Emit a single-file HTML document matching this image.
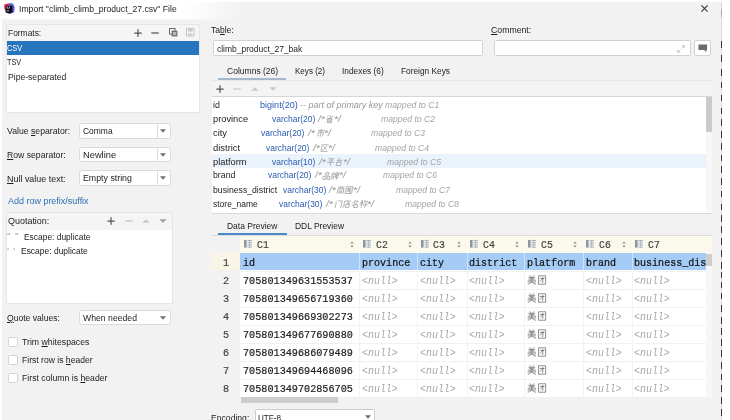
<!DOCTYPE html>
<html><head><meta charset="utf-8"><title>Import File</title>
<style>
html,body{margin:0;padding:0;}
html{overflow:hidden;width:730px;height:420px;background:#f2f2f2;}
body{width:730px;height:420px;overflow:hidden;background:#f2f2f2;position:relative;font-family:"Liberation Sans", sans-serif;}
.a{position:absolute;}
.t{position:absolute;white-space:pre;transform-origin:0 50%;}
.m{-webkit-text-stroke:0.22px;}
u{text-decoration:underline;text-underline-offset:1px;text-decoration-thickness:0.8px;}
svg{position:absolute;overflow:visible;}
#w{position:absolute;left:0;top:0;width:730px;height:420px;filter:blur(0.55px);}
#c{position:absolute;left:0;top:0;width:730px;height:420px;overflow:hidden;}
</style></head><body><div id="c"><div id="w">
<div class="a" style="left:-10px;top:-10px;width:750px;height:440px;background:#f2f2f2;"></div>
<div class="a" style="left:-10px;top:-10px;width:750px;height:12px;background:#ffffff;"></div>
<div class="a" style="left:0px;top:2px;width:730px;height:18px;background:linear-gradient(90deg,#ffffff 0,#ffffff 185px,#f2f2f2 240px);"></div>
<div class="a" style="left:0px;top:18px;width:730px;height:2.6px;background:linear-gradient(180deg,rgba(242,242,242,0),rgba(242,242,242,1));"></div>
<div class="a" style="left:-10px;top:19px;width:11.6px;height:411px;background:#ffffff;"></div>
<div class="a" style="left:722px;top:-10px;width:18px;height:440px;background:#ffffff;"></div>
<div class="a" style="left:721px;top:2px;width:1px;height:428px;background:#d9d9d9;"></div>
<div class="a" style="left:721px;top:41px;width:1px;height:6.8px;background:#383838;"></div>
<div class="a" style="left:721px;top:55px;width:1px;height:6.8px;background:#383838;"></div>
<div class="a" style="left:721px;top:69px;width:1px;height:6.8px;background:#383838;"></div>
<div class="a" style="left:721px;top:81.5px;width:1px;height:6.8px;background:#383838;"></div>
<div class="a" style="left:721px;top:94.5px;width:1px;height:6.8px;background:#383838;"></div>
<div class="a" style="left:721px;top:107.5px;width:1px;height:6.8px;background:#383838;"></div>
<div class="a" style="left:721px;top:119.3px;width:1px;height:6.8px;background:#383838;"></div>
<div class="a" style="left:721px;top:131px;width:1px;height:6.8px;background:#383838;"></div>
<div class="a" style="left:721px;top:142.9px;width:1px;height:6.8px;background:#383838;"></div>
<div class="a" style="left:721px;top:154.6px;width:1px;height:6.8px;background:#383838;"></div>
<div class="a" style="left:721px;top:166.4px;width:1px;height:6.8px;background:#383838;"></div>
<div class="a" style="left:721px;top:178.2px;width:1px;height:6.8px;background:#383838;"></div>
<div class="a" style="left:721px;top:190.6px;width:1px;height:6.8px;background:#383838;"></div>
<div class="a" style="left:721px;top:203.6px;width:1px;height:6.8px;background:#383838;"></div>
<div class="a" style="left:721px;top:214.8px;width:1px;height:6.8px;background:#383838;"></div>
<div class="a" style="left:721px;top:226.4px;width:1px;height:6.8px;background:#383838;"></div>
<div class="a" style="left:721px;top:238.2px;width:1px;height:6.8px;background:#383838;"></div>
<div class="a" style="left:721px;top:250px;width:1px;height:6.8px;background:#383838;"></div>
<div class="a" style="left:721px;top:261.8px;width:1px;height:6.8px;background:#383838;"></div>
<div class="a" style="left:721px;top:271.6px;width:1px;height:6.8px;background:#383838;"></div>
<div class="a" style="left:721px;top:281.6px;width:1px;height:6.8px;background:#383838;"></div>
<div class="a" style="left:721px;top:292.6px;width:1px;height:6.8px;background:#383838;"></div>
<div class="a" style="left:721px;top:305px;width:1px;height:6.8px;background:#383838;"></div>
<div class="a" style="left:721px;top:316.8px;width:1px;height:6.8px;background:#383838;"></div>
<div class="a" style="left:721px;top:327.8px;width:1px;height:6.8px;background:#383838;"></div>
<div class="a" style="left:721px;top:339.3px;width:1px;height:6.8px;background:#383838;"></div>
<div class="a" style="left:721px;top:350.3px;width:1px;height:6.8px;background:#383838;"></div>
<div class="a" style="left:721px;top:361.8px;width:1px;height:6.8px;background:#383838;"></div>
<div class="a" style="left:721px;top:373.6px;width:1px;height:6.8px;background:#383838;"></div>
<div class="a" style="left:721px;top:385.4px;width:1px;height:6.8px;background:#383838;"></div>
<div class="a" style="left:721px;top:397.1px;width:1px;height:6.8px;background:#383838;"></div>
<div class="a" style="left:721px;top:409px;width:1px;height:6.8px;background:#383838;"></div>
<div class="a" style="left:721px;top:9px;width:1px;height:8px;background:#b0b0b0;"></div>
<svg style="left:3.5px;top:2.7px" width="10.8" height="10.8" viewBox="0 0 10.8 10.8"><defs><linearGradient id="ig1" x1="0" y1="0" x2="1" y2="0.6"><stop offset="0" stop-color="#f2307a"/><stop offset="1" stop-color="#d01f3c"/></linearGradient><linearGradient id="ig2" x1="0" y1="0" x2="1" y2="1"><stop offset="0" stop-color="#1f6fd6"/><stop offset="1" stop-color="#8a4ff0"/></linearGradient></defs><path d="M0.3 1.2L5.8 0.2L6.2 4.5L1.2 7.5L0.2 5Z" fill="url(#ig1)"/><path d="M5.8 0.2L8.8 0.6L10.7 4L10.2 9.2L6.6 10.8L4 9.5Z" fill="url(#ig2)"/><path d="M1.2 7.5L4 10.5L7 10.8L3 6Z" fill="#14205e"/><rect x="1.7" y="2.8" width="6.7" height="6.9" fill="#06060e"/><path d="M2.7 3.6H3.6V5.7H2.7ZM4.3 3.6H5.7V5.1Q5.7 5.8 4.9 5.8H4.2V5.2H4.8V3.6Z" fill="#e8e8e8"/><rect x="2.6" y="7.5" width="2.6" height="0.7" fill="#fff"/></svg>
<span class="t" id="t0" style="left:19.3px;top:1.8px;line-height:14px;font-size:9.8px;color:#1c1c1c;transform:scaleX(0.8809);">Import "climb_climb_product_27.csv" File</span>
<svg style="left:701.2px;top:5.4px" width="7" height="7" viewBox="0 0 7 7"><path d="M0.4 0.4L6.6 6.6M6.6 0.4L0.4 6.6" stroke="#333" stroke-width="1.05" fill="none"/></svg>
<div class="a" style="left:6px;top:24px;width:194px;height:89px;background:#ffffff;border:1px solid #e6e6e6;box-sizing:border-box;"></div>
<div class="a" style="left:7px;top:25px;width:192px;height:16px;background:#f5f5f5;"></div>
<span class="t" id="t1" style="left:7.6px;top:25.5px;line-height:14px;font-size:9.6px;color:#1c1c1c;transform:scaleX(0.8769);">Formats:</span>
<svg style="left:132.8px;top:27.6px" width="10" height="10" viewBox="-5 -5 10 10"><path d="M-3.7 0H3.7M0 -3.7V3.7" stroke="#555" stroke-width="1.25" fill="none"/></svg>
<svg style="left:150px;top:27.6px" width="10" height="10" viewBox="-5 -5 10 10"><path d="M-3.7 0H3.7" stroke="#555" stroke-width="1.25" fill="none"/></svg>
<svg style="left:169px;top:27.5px" width="9" height="9" viewBox="0 0 9 9"><rect x="0.5" y="0.5" width="5.6" height="5.6" fill="none" stroke="#6e6e6e" stroke-width="1"/><rect x="2.6" y="2.6" width="5.8" height="5.8" fill="#6e6e6e"/><rect x="3.8" y="4" width="3.4" height="3" fill="#f7f7f7" opacity="0.55"/></svg>
<svg style="left:186.3px;top:28px" width="8.5" height="8.5" viewBox="0 0 9 9"><path d="M0.5 0.5H8.5V8.5H0.5Z" fill="none" stroke="#c4c4c4" stroke-width="1"/><rect x="2" y="0.5" width="5" height="3.2" fill="#c9c9c9"/><rect x="2" y="5.5" width="5" height="3" fill="#d4d4d4"/></svg>
<div class="a" style="left:7px;top:41px;width:192px;height:14px;background:#2675bf;"></div>
<span class="t" id="t2" style="left:7.4px;top:41.3px;line-height:14px;font-size:9.6px;color:#ffffff;transform:scaleX(0.7702);">CSV</span>
<span class="t" id="t3" style="left:7.4px;top:55.0px;line-height:14px;font-size:9.6px;color:#1c1c1c;transform:scaleX(0.7605);">TSV</span>
<span class="t" id="t4" style="left:7.5px;top:69.9px;line-height:14px;font-size:9.6px;color:#1c1c1c;transform:scaleX(0.8958);">Pipe-separated</span>
<span class="t" id="t5" style="left:6.9px;top:124.2px;line-height:14px;font-size:9.6px;color:#1c1c1c;transform:scaleX(0.9053);">Value <u>s</u>eparator:</span>
<div class="a" style="left:78.8px;top:123.4px;width:91.8px;height:15.5px;background:#ffffff;border:1px solid #dadada;box-sizing:border-box;border-radius:2.5px;"></div>
<div class="a" style="left:157px;top:124.4px;width:1px;height:13.5px;background:#dcdcdc;"></div>
<svg style="left:158.4px;top:126.45000000000002px" width="10" height="10" viewBox="-5 -5 10 10"><path d="M-3.0 -1.65L0 1.65L3.0 -1.65Z" fill="#707070"/></svg>
<span class="t" id="t6" style="left:83.4px;top:124.25px;line-height:14px;font-size:9.6px;color:#1c1c1c;transform:scaleX(0.8811);">Comma</span>
<span class="t" id="t7" style="left:6.9px;top:147.9px;line-height:14px;font-size:9.6px;color:#1c1c1c;transform:scaleX(0.9022);"><u>R</u>ow separator:</span>
<div class="a" style="left:78.8px;top:146.8px;width:91.8px;height:15.5px;background:#ffffff;border:1px solid #dadada;box-sizing:border-box;border-radius:2.5px;"></div>
<div class="a" style="left:157px;top:147.8px;width:1px;height:13.5px;background:#dcdcdc;"></div>
<svg style="left:158.4px;top:149.85000000000002px" width="10" height="10" viewBox="-5 -5 10 10"><path d="M-3.0 -1.65L0 1.65L3.0 -1.65Z" fill="#707070"/></svg>
<span class="t" id="t8" style="left:83.4px;top:147.65px;line-height:14px;font-size:9.6px;color:#1c1c1c;transform:scaleX(0.9695);">Newline</span>
<span class="t" id="t9" style="left:7.2px;top:171.5px;line-height:14px;font-size:9.6px;color:#1c1c1c;transform:scaleX(0.9311);"><u>N</u>ull value text:</span>
<div class="a" style="left:78.8px;top:170.3px;width:91.8px;height:15.5px;background:#ffffff;border:1px solid #dadada;box-sizing:border-box;border-radius:2.5px;"></div>
<div class="a" style="left:157px;top:171.3px;width:1px;height:13.5px;background:#dcdcdc;"></div>
<svg style="left:158.4px;top:173.35000000000002px" width="10" height="10" viewBox="-5 -5 10 10"><path d="M-3.0 -1.65L0 1.65L3.0 -1.65Z" fill="#707070"/></svg>
<span class="t" id="t10" style="left:83.4px;top:171.15px;line-height:14px;font-size:9.6px;color:#1c1c1c;transform:scaleX(0.9170);">Empty string</span>
<span class="t" id="t11" style="left:7.8px;top:193.7px;line-height:14px;font-size:9.6px;color:#2b6fb6;transform:scaleX(0.9350);">Add row prefix/suffix</span>
<div class="a" style="left:6px;top:212px;width:167px;height:92px;background:#ffffff;border:1px solid #e6e6e6;box-sizing:border-box;"></div>
<div class="a" style="left:7px;top:213px;width:165px;height:16.6px;background:#f5f5f5;"></div>
<span class="t" id="t12" style="left:7.7px;top:214.3px;line-height:14px;font-size:9.6px;color:#1c1c1c;transform:scaleX(0.9327);">Quotation:</span>
<svg style="left:106.3px;top:216px" width="10" height="10" viewBox="-5 -5 10 10"><path d="M-3.7 0H3.7M0 -3.7V3.7" stroke="#555" stroke-width="1.25" fill="none"/></svg>
<svg style="left:124px;top:216px" width="10" height="10" viewBox="-5 -5 10 10"><path d="M-3.7 0H3.7" stroke="#c4c4c4" stroke-width="1.25" fill="none"/></svg>
<svg style="left:141px;top:216px" width="10" height="10" viewBox="-5 -5 10 10"><path d="M-3.8 1.8L0 -1.8L3.8 1.8Z" fill="#c9c9c9"/></svg>
<svg style="left:158.4px;top:216px" width="10" height="10" viewBox="-5 -5 10 10"><path d="M-3.8 -1.8L0 1.8L3.8 -1.8Z" fill="#a2a2a2"/></svg>
<span class="t" id="t13" style="left:7.2px;top:230.4px;line-height:14px;font-size:8.2px;color:#888;">"</span>
<span class="t" id="t14" style="left:15.2px;top:230.4px;line-height:14px;font-size:8.2px;color:#888;">"</span>
<span class="t" id="t15" style="left:23.6px;top:230.2px;line-height:14px;font-size:9.6px;color:#1c1c1c;transform:scaleX(0.8767);">Escape: duplicate</span>
<span class="t" id="t16" style="left:7.2px;top:244.5px;line-height:14px;font-size:8.2px;color:#888;">'</span>
<span class="t" id="t17" style="left:13.2px;top:244.5px;line-height:14px;font-size:8.2px;color:#888;">'</span>
<span class="t" id="t18" style="left:20.6px;top:244.1px;line-height:14px;font-size:9.6px;color:#1c1c1c;transform:scaleX(0.8820);">Escape: duplicate</span>
<span class="t" id="t19" style="left:6.9px;top:310.8px;line-height:14px;font-size:9.6px;color:#1c1c1c;transform:scaleX(0.8933);"><u>Q</u>uote values:</span>
<div class="a" style="left:78.8px;top:309.6px;width:91.8px;height:15.9px;background:#ffffff;border:1px solid #dadada;box-sizing:border-box;border-radius:2.5px;"></div>
<svg style="left:158.4px;top:312.85px" width="10" height="10" viewBox="-5 -5 10 10"><path d="M-3.0 -1.65L0 1.65L3.0 -1.65Z" fill="#707070"/></svg>
<span class="t" id="t20" style="left:83.4px;top:310.65px;line-height:14px;font-size:9.6px;color:#1c1c1c;transform:scaleX(0.9038);">When needed</span>
<div class="a" style="left:8px;top:337px;width:10px;height:10px;background:#ffffff;border:1px solid #d4d4d4;box-sizing:border-box;border-radius:1.5px;"></div>
<span class="t" id="t21" style="left:22.4px;top:335.0px;line-height:14px;font-size:9.6px;color:#1c1c1c;transform:scaleX(0.9070);">Trim <u>w</u>hitespaces</span>
<div class="a" style="left:8px;top:355px;width:10px;height:10px;background:#ffffff;border:1px solid #d4d4d4;box-sizing:border-box;border-radius:1.5px;"></div>
<span class="t" id="t22" style="left:22.4px;top:352.8px;line-height:14px;font-size:9.6px;color:#1c1c1c;transform:scaleX(0.8944);">First row is <u>h</u>eader</span>
<div class="a" style="left:8px;top:373px;width:10px;height:10px;background:#ffffff;border:1px solid #d4d4d4;box-sizing:border-box;border-radius:1.5px;"></div>
<span class="t" id="t23" style="left:22.4px;top:370.7px;line-height:14px;font-size:9.6px;color:#1c1c1c;transform:scaleX(0.9057);">First column is <u>h</u>eader</span>
<span class="t" id="t24" style="left:210.9px;top:22.6px;line-height:14px;font-size:9.6px;color:#1c1c1c;transform:scaleX(0.8859);">Ta<u>b</u>le:</span>
<div class="a" style="left:213px;top:40px;width:270px;height:15.8px;background:#ffffff;border:1px solid #d2d2d2;box-sizing:border-box;border-radius:1.5px;"></div>
<span class="t" id="t25" style="left:216.7px;top:41.8px;line-height:14px;font-size:9.6px;color:#1c1c1c;transform:scaleX(0.8835);">climb_product_27_bak</span>
<span class="t" id="t26" style="left:491.4px;top:22.6px;line-height:14px;font-size:9.6px;color:#1c1c1c;transform:scaleX(0.9082);"><u>C</u>omment:</span>
<div class="a" style="left:493.5px;top:40px;width:197.2px;height:15.8px;background:#ffffff;border:1px solid #d2d2d2;box-sizing:border-box;border-radius:1.5px;"></div>
<svg style="left:677px;top:44.5px" width="8" height="8" viewBox="0 0 8 8"><path d="M4.8 0.8H7.2V3.2M7.2 0.8L4.6 3.4M3.2 7.2H0.8V4.8M0.8 7.2L3.4 4.6" stroke="#bdbdbd" stroke-width="0.9" fill="none"/></svg>
<div class="a" style="left:694.4px;top:40px;width:16.6px;height:15.8px;background:#ffffff;border:1px solid #d2d2d2;box-sizing:border-box;border-radius:2px;"></div>
<svg style="left:697.8px;top:43.8px" width="9.6" height="8.6" viewBox="0 0 10 9"><path d="M0.5 0.5H9.5V6.2H8.8V8.6L6.4 6.2H0.5Z" fill="#6a6a6a"/></svg>
<span class="t" id="t27" style="left:226.8px;top:64.2px;line-height:14px;font-size:9.6px;color:#1c1c1c;transform:scaleX(0.8890);">Columns (26)</span>
<span class="t" id="t28" style="left:295px;top:64.2px;line-height:14px;font-size:9.6px;color:#1c1c1c;transform:scaleX(0.8395);">Keys (2)</span>
<span class="t" id="t29" style="left:342.4px;top:64.2px;line-height:14px;font-size:9.6px;color:#1c1c1c;transform:scaleX(0.8708);">Indexes (6)</span>
<span class="t" id="t30" style="left:401.3px;top:64.2px;line-height:14px;font-size:9.6px;color:#1c1c1c;transform:scaleX(0.8668);">Foreign Keys</span>
<div class="a" style="left:212px;top:79.8px;width:499.5px;height:1px;background:#e7e7e7;"></div>
<div class="a" style="left:218px;top:78.4px;width:68px;height:1.6px;background:#a6b6cb;"></div>
<div class="a" style="left:212px;top:81px;width:499.5px;height:15.5px;background:#f4f4f4;"></div>
<svg style="left:214.6px;top:83.6px" width="10" height="10" viewBox="-5 -5 10 10"><path d="M-3.7 0H3.7M0 -3.7V3.7" stroke="#555" stroke-width="1.25" fill="none"/></svg>
<svg style="left:232px;top:83.6px" width="10" height="10" viewBox="-5 -5 10 10"><path d="M-3.7 0H3.7" stroke="#c9c9c9" stroke-width="1.25" fill="none"/></svg>
<svg style="left:249.7px;top:83.8px" width="10" height="10" viewBox="-5 -5 10 10"><path d="M-3.8 1.8L0 -1.8L3.8 1.8Z" fill="#c9c9c9"/></svg>
<svg style="left:267.5px;top:83.8px" width="10" height="10" viewBox="-5 -5 10 10"><path d="M-3.8 -1.8L0 1.8L3.8 -1.8Z" fill="#c9c9c9"/></svg>
<div class="a" style="left:212px;top:96.5px;width:499.5px;height:116.5px;background:#ffffff;"></div>
<div class="a" style="left:212px;top:96.3px;width:499.5px;height:1px;background:#d6d6d6;"></div>
<div class="a" style="left:212px;top:212.6px;width:499.5px;height:1px;background:#dadada;"></div>
<div class="a" style="left:212px;top:154.2px;width:493.8px;height:13.5px;background:#eaf2fb;"></div>
<div class="a" style="left:705.8px;top:97.3px;width:5.8px;height:115.3px;background:#f7f7f7;"></div>
<div class="a" style="left:706.2px;top:97.3px;width:5.4px;height:35px;background:#cbcbcb;"></div>
<span class="t" id="t31" style="left:213.4px;top:98.3px;line-height:14px;font-size:9.5px;color:#1c1c1c;transform:scaleX(0.9316);">id</span>
<span class="t" id="t32" style="left:260.2px;top:98.3px;line-height:14px;font-size:9.5px;color:#2a5db0;transform:scaleX(0.9543);">bigint(20)</span>
<span class="t" id="t33" style="left:300.4px;top:98.3px;line-height:14px;font-size:9.5px;color:#969696;font-style:italic;transform:scaleX(0.9448);">-- part of primary key</span>
<span class="t" id="t34" style="left:385.3px;top:98.3px;line-height:14px;font-size:9.5px;color:#a4a4a4;font-style:italic;transform:scaleX(0.9114);">mapped to C1</span>
<span class="t" id="t35" style="left:213.4px;top:111.9px;line-height:14px;font-size:9.5px;color:#1c1c1c;transform:scaleX(0.9771);">province</span>
<span class="t" id="t36" style="left:272px;top:111.9px;line-height:14px;font-size:9.5px;color:#2a5db0;transform:scaleX(0.8913);">varchar(20)</span>
<span class="t" id="t37" style="left:318px;top:111.9px;line-height:14px;font-size:9.5px;color:#969696;font-style:italic;transform:scaleX(1.0877);">/*</span>
<svg style="left:325.3px;top:115.10000000000001px" width="8.0" height="8.0" viewBox="0 0 10.0 10"><g transform="skewX(-11)" style="transform-origin:0 10px"><g transform="translate(0.0,0)"><path d="M5 0.2V2.8M2.6 0.8L1.2 2.6M7.2 0.8L8.8 2.4M7.6 2.2C6 4 3.6 4.6 0.8 4.8M2.6 4.6H7.8V9.6H2.6ZM2.6 6.2H7.8M2.6 7.8H7.8" fill="none" stroke="#a0a0a0" stroke-width="0.9375" stroke-linecap="butt" stroke-linejoin="miter"/></g></g></svg>
<span class="t" id="t38" style="left:333.5px;top:111.9px;line-height:14px;font-size:9.5px;color:#969696;font-style:italic;transform:scaleX(1.0877);">*/</span>
<span class="t" id="t39" style="left:381px;top:111.9px;line-height:14px;font-size:9.5px;color:#a4a4a4;font-style:italic;transform:scaleX(0.9047);">mapped to C2</span>
<span class="t" id="t40" style="left:213.4px;top:126.1px;line-height:14px;font-size:9.5px;color:#1c1c1c;transform:scaleX(0.9825);">city</span>
<span class="t" id="t41" style="left:261.4px;top:126.1px;line-height:14px;font-size:9.5px;color:#2a5db0;transform:scaleX(0.8934);">varchar(20)</span>
<span class="t" id="t42" style="left:308.2px;top:126.1px;line-height:14px;font-size:9.5px;color:#969696;font-style:italic;transform:scaleX(1.0877);">/*</span>
<svg style="left:315.5px;top:129.29999999999998px" width="8.0" height="8.0" viewBox="0 0 10.0 10"><g transform="skewX(-11)" style="transform-origin:0 10px"><g transform="translate(0.0,0)"><path d="M5 0.2V1.6M0.8 1.8H9.2M2 9V3.8H8V8.2L7 8.6M5 1.8V9.8" fill="none" stroke="#a0a0a0" stroke-width="0.9375" stroke-linecap="butt" stroke-linejoin="miter"/></g></g></svg>
<span class="t" id="t43" style="left:323.7px;top:126.1px;line-height:14px;font-size:9.5px;color:#969696;font-style:italic;transform:scaleX(1.0877);">*/</span>
<span class="t" id="t44" style="left:370.7px;top:126.1px;line-height:14px;font-size:9.5px;color:#a4a4a4;font-style:italic;transform:scaleX(0.9047);">mapped to C3</span>
<span class="t" id="t45" style="left:213.4px;top:140.5px;line-height:14px;font-size:9.5px;color:#1c1c1c;transform:scaleX(0.9908);">district</span>
<span class="t" id="t46" style="left:266px;top:140.5px;line-height:14px;font-size:9.5px;color:#2a5db0;transform:scaleX(0.8934);">varchar(20)</span>
<span class="t" id="t47" style="left:312.9px;top:140.5px;line-height:14px;font-size:9.5px;color:#969696;font-style:italic;transform:scaleX(1.0877);">/*</span>
<svg style="left:320.2px;top:143.7px" width="8.0" height="8.0" viewBox="0 0 10.0 10"><g transform="skewX(-11)" style="transform-origin:0 10px"><g transform="translate(0.0,0)"><path d="M9 1H1V9.2H9.2M3 2.8L7.6 7.6M7.4 2.8L2.8 7.6" fill="none" stroke="#a0a0a0" stroke-width="0.9375" stroke-linecap="butt" stroke-linejoin="miter"/></g></g></svg>
<span class="t" id="t48" style="left:328.4px;top:140.5px;line-height:14px;font-size:9.5px;color:#969696;font-style:italic;transform:scaleX(1.0877);">*/</span>
<span class="t" id="t49" style="left:374.5px;top:140.5px;line-height:14px;font-size:9.5px;color:#a4a4a4;font-style:italic;transform:scaleX(0.9047);">mapped to C4</span>
<span class="t" id="t50" style="left:213.4px;top:154.5px;line-height:14px;font-size:9.5px;color:#1c1c1c;transform:scaleX(0.9788);">platform</span>
<span class="t" id="t51" style="left:272px;top:154.5px;line-height:14px;font-size:9.5px;color:#2a5db0;transform:scaleX(0.8913);">varchar(10)</span>
<span class="t" id="t52" style="left:318.8px;top:154.5px;line-height:14px;font-size:9.5px;color:#969696;font-style:italic;transform:scaleX(1.0877);">/*</span>
<svg style="left:326.1px;top:157.7px" width="16.3" height="8.0" viewBox="0 0 20.375 10"><g transform="skewX(-11)" style="transform-origin:0 10px"><g transform="translate(0.0,0)"><path d="M1.4 1H8.6M2.8 2.4L3.6 4.2M7.2 2.4L6.4 4.2M0.6 5.4H9.4M5 1V9.8" fill="none" stroke="#a0a0a0" stroke-width="0.9375" stroke-linecap="butt" stroke-linejoin="miter"/></g><g transform="translate(10.375,0)"><path d="M5.2 0.4L2.4 3.4H8M6.8 2L8.2 3.8M2.2 5.2H7.8V9.4H2.2Z" fill="none" stroke="#a0a0a0" stroke-width="0.9375" stroke-linecap="butt" stroke-linejoin="miter"/></g></g></svg>
<span class="t" id="t53" style="left:342.6px;top:154.5px;line-height:14px;font-size:9.5px;color:#969696;font-style:italic;transform:scaleX(1.0877);">*/</span>
<span class="t" id="t54" style="left:386.8px;top:154.5px;line-height:14px;font-size:9.5px;color:#a4a4a4;font-style:italic;transform:scaleX(0.9047);">mapped to C5</span>
<span class="t" id="t55" style="left:213.4px;top:168.4px;line-height:14px;font-size:9.5px;color:#1c1c1c;transform:scaleX(0.9213);">brand</span>
<span class="t" id="t56" style="left:268.3px;top:168.4px;line-height:14px;font-size:9.5px;color:#2a5db0;transform:scaleX(0.8934);">varchar(20)</span>
<span class="t" id="t57" style="left:315px;top:168.4px;line-height:14px;font-size:9.5px;color:#969696;font-style:italic;transform:scaleX(1.0877);">/*</span>
<svg style="left:322.3px;top:171.6px" width="16.3" height="8.0" viewBox="0 0 20.375 10"><g transform="skewX(-11)" style="transform-origin:0 10px"><g transform="translate(0.0,0)"><path d="M3 0.8H7V3.8H3ZM0.8 5.4H4.2V9.2H0.8ZM5.8 5.4H9.2V9.2H5.8Z" fill="none" stroke="#a0a0a0" stroke-width="0.9375" stroke-linecap="butt" stroke-linejoin="miter"/></g><g transform="translate(10.375,0)"><path d="M1.2 0.6V6C1.2 8 0.9 9 0.4 9.6M3.4 0.4V3.2M1.2 3.2H4M1.2 5.4H3.4V9.4M5.4 1.2H9V4.6H5.4ZM5.4 2.9H9M7.2 0.2L6.8 1.2M4.8 6.6H9.6M7.4 4.6V9.8M6.6 4.8L5 6.2" fill="none" stroke="#a0a0a0" stroke-width="0.9375" stroke-linecap="butt" stroke-linejoin="miter"/></g></g></svg>
<span class="t" id="t58" style="left:338.8px;top:168.4px;line-height:14px;font-size:9.5px;color:#969696;font-style:italic;transform:scaleX(1.0877);">*/</span>
<span class="t" id="t59" style="left:383px;top:168.4px;line-height:14px;font-size:9.5px;color:#a4a4a4;font-style:italic;transform:scaleX(0.9047);">mapped to C6</span>
<span class="t" id="t60" style="left:213.4px;top:183.0px;line-height:14px;font-size:9.5px;color:#1c1c1c;transform:scaleX(0.9127);">business_district</span>
<span class="t" id="t61" style="left:282.5px;top:183.0px;line-height:14px;font-size:9.5px;color:#2a5db0;transform:scaleX(0.8913);">varchar(30)</span>
<span class="t" id="t62" style="left:329px;top:183.0px;line-height:14px;font-size:9.5px;color:#969696;font-style:italic;transform:scaleX(1.0877);">/*</span>
<svg style="left:336.3px;top:186.2px" width="16.3" height="8.0" viewBox="0 0 20.375 10"><g transform="skewX(-11)" style="transform-origin:0 10px"><g transform="translate(0.0,0)"><path d="M5 0.1V1.2M0.8 1.4H9.2M3 1.8L3.6 3M7 1.8L6.4 3M1.4 9.8V3.4H8.6V9L7.8 9.4M4 4.4L3 5.8M6 4.4L7 5.8M3.4 6.6H6.6V8.6H3.4Z" fill="none" stroke="#a0a0a0" stroke-width="0.9375" stroke-linecap="butt" stroke-linejoin="miter"/></g><g transform="translate(10.375,0)"><path d="M1 0.8H9V9.4H1ZM3.6 1.8L4 2.8M6.4 1.8L6 2.8M2.4 3.4H7.6M2.2 4.8H7.8M5 3.4C4.6 5.4 3.6 6.4 2.2 7M5.4 5C6 6 6.8 6.6 7.8 7M3.8 6.4H6V8L7.4 8.2" fill="none" stroke="#a0a0a0" stroke-width="0.9375" stroke-linecap="butt" stroke-linejoin="miter"/></g></g></svg>
<span class="t" id="t63" style="left:352.8px;top:183.0px;line-height:14px;font-size:9.5px;color:#969696;font-style:italic;transform:scaleX(1.0877);">*/</span>
<span class="t" id="t64" style="left:396.4px;top:183.0px;line-height:14px;font-size:9.5px;color:#a4a4a4;font-style:italic;transform:scaleX(0.9047);">mapped to C7</span>
<span class="t" id="t65" style="left:213.4px;top:197.2px;line-height:14px;font-size:9.5px;color:#1c1c1c;transform:scaleX(0.8929);">store_name</span>
<span class="t" id="t66" style="left:279.4px;top:197.2px;line-height:14px;font-size:9.5px;color:#2a5db0;transform:scaleX(0.8934);">varchar(30)</span>
<span class="t" id="t67" style="left:326.4px;top:197.2px;line-height:14px;font-size:9.5px;color:#969696;font-style:italic;transform:scaleX(1.0877);">/*</span>
<svg style="left:333.7px;top:200.39999999999998px" width="32.9" height="8.0" viewBox="0 0 41.125 10"><g transform="skewX(-11)" style="transform-origin:0 10px"><g transform="translate(0.0,0)"><path d="M2 0.4L3 1.6M1.4 2.6V9.8M4 1.2H8.6V9L7.6 9.4" fill="none" stroke="#a0a0a0" stroke-width="0.9375" stroke-linecap="butt" stroke-linejoin="miter"/></g><g transform="translate(10.375,0)"><path d="M5 0.1V1.2M1.4 1.4H9.4M1.4 1.4V6C1.4 8 1 9 0.4 9.6M5.6 2.4V5.4M5.6 3.8H8.6M3.4 5.6H8V9.2H3.4Z" fill="none" stroke="#a0a0a0" stroke-width="0.9375" stroke-linecap="butt" stroke-linejoin="miter"/></g><g transform="translate(20.75,0)"><path d="M4.4 0.2C3.6 1.8 2.4 3 0.8 3.8M4 1.4H7.8C6.6 4 4 6 0.6 7M3 2.8L5 4.2M3.6 6H8.4V9.4H3.6Z" fill="none" stroke="#a0a0a0" stroke-width="0.9375" stroke-linecap="butt" stroke-linejoin="miter"/></g><g transform="translate(31.125,0)"><path d="M3.6 0.6L1 1.4M0.4 3H4.6M2.6 1.2V9.8M2.4 3.4L0.4 6.4M2.8 3.6L4.4 5.4M6.2 0.4L5 3M6 1.6H9.4L8.8 2.8M7.4 3V9L6.6 9.4M5.8 4.6L5 7.4M8.8 4.6L9.6 7.2" fill="none" stroke="#a0a0a0" stroke-width="0.9375" stroke-linecap="butt" stroke-linejoin="miter"/></g></g></svg>
<span class="t" id="t68" style="left:366.79999999999995px;top:197.2px;line-height:14px;font-size:9.5px;color:#969696;font-style:italic;transform:scaleX(1.0877);">*/</span>
<span class="t" id="t69" style="left:405.2px;top:197.2px;line-height:14px;font-size:9.5px;color:#a4a4a4;font-style:italic;transform:scaleX(0.9047);">mapped to C8</span>
<span class="t" id="t70" style="left:227.4px;top:218.9px;line-height:14px;font-size:9.6px;color:#1c1c1c;transform:scaleX(0.8832);">Data Preview</span>
<span class="t" id="t71" style="left:295px;top:218.9px;line-height:14px;font-size:9.6px;color:#1c1c1c;transform:scaleX(0.8809);">DDL Preview</span>
<div class="a" style="left:212px;top:234.6px;width:499.5px;height:1px;background:#dcdcdc;"></div>
<div class="a" style="left:218px;top:233.4px;width:68.5px;height:2px;background:#4a88c7;"></div>
<div class="a" style="left:211px;top:235.8px;width:500.70000000000005px;height:17.399999999999977px;background:#fbf9ec;"></div>
<div class="a" style="left:211px;top:235.8px;width:29.30000000000001px;height:161.39999999999998px;background:#f2f2f2;"></div>
<div class="a" style="left:240.3px;top:253.2px;width:465.90000000000003px;height:144.0px;background:#ffffff;"></div>
<div class="a" style="left:211px;top:253.2px;width:29.30000000000001px;height:17.1px;background:#f8f5e6;"></div>
<div class="a" style="left:240.3px;top:253.2px;width:465.90000000000003px;height:17.1px;background:#a4ccf6;"></div>
<div class="a" style="left:706.2px;top:253.2px;width:5.5px;height:144.0px;background:#f7f7f7;"></div>
<div class="a" style="left:706.4000000000001px;top:253.5px;width:5.3px;height:12.3px;background:#cecece;"></div>
<div class="a" style="left:211px;top:270.59999999999997px;width:495.20000000000005px;height:1px;background:#f1f1f1;"></div>
<div class="a" style="left:211px;top:288.59999999999997px;width:495.20000000000005px;height:1px;background:#f1f1f1;"></div>
<div class="a" style="left:211px;top:306.59999999999997px;width:495.20000000000005px;height:1px;background:#f1f1f1;"></div>
<div class="a" style="left:211px;top:324.59999999999997px;width:495.20000000000005px;height:1px;background:#f1f1f1;"></div>
<div class="a" style="left:211px;top:342.59999999999997px;width:495.20000000000005px;height:1px;background:#f1f1f1;"></div>
<div class="a" style="left:211px;top:360.59999999999997px;width:495.20000000000005px;height:1px;background:#f1f1f1;"></div>
<div class="a" style="left:211px;top:378.59999999999997px;width:495.20000000000005px;height:1px;background:#f1f1f1;"></div>
<div class="a" style="left:211px;top:396.59999999999997px;width:495.20000000000005px;height:1px;background:#f1f1f1;"></div>
<div class="a" style="left:359.4px;top:235.8px;width:1px;height:161.39999999999998px;background:rgba(255,255,255,0.45);"></div>
<div class="a" style="left:359.4px;top:271.2px;width:1px;height:126.0px;background:#f3f3f3;"></div>
<div class="a" style="left:417.0px;top:235.8px;width:1px;height:161.39999999999998px;background:rgba(255,255,255,0.45);"></div>
<div class="a" style="left:417.0px;top:271.2px;width:1px;height:126.0px;background:#f3f3f3;"></div>
<div class="a" style="left:467.2px;top:235.8px;width:1px;height:161.39999999999998px;background:rgba(255,255,255,0.45);"></div>
<div class="a" style="left:467.2px;top:271.2px;width:1px;height:126.0px;background:#f3f3f3;"></div>
<div class="a" style="left:524.3px;top:235.8px;width:1px;height:161.39999999999998px;background:rgba(255,255,255,0.45);"></div>
<div class="a" style="left:524.3px;top:271.2px;width:1px;height:126.0px;background:#f3f3f3;"></div>
<div class="a" style="left:582.5px;top:235.8px;width:1px;height:161.39999999999998px;background:rgba(255,255,255,0.45);"></div>
<div class="a" style="left:582.5px;top:271.2px;width:1px;height:126.0px;background:#f3f3f3;"></div>
<div class="a" style="left:631.5px;top:235.8px;width:1px;height:161.39999999999998px;background:rgba(255,255,255,0.45);"></div>
<div class="a" style="left:631.5px;top:271.2px;width:1px;height:126.0px;background:#f3f3f3;"></div>
<svg style="left:243.8px;top:240.4px" width="8" height="7.6" viewBox="0 0 8 7.6"><rect x="0" y="0" width="2.6" height="7.6" fill="#8d97a3"/><path d="M3.4 0.5H8M3.4 2.7H8M3.4 4.9H8M3.4 7.1H8M5.7 0V7.6" stroke="#a9b3bf" stroke-width="1" fill="none"/></svg>
<span class="t m" id="t72" style="left:256.8px;top:238.4px;line-height:14px;font-size:11.5px;color:#444;font-family:'Liberation Mono', monospace;transform:scaleX(0.8543);">C1</span>
<svg style="left:349.7px;top:241.4px" width="4" height="7" viewBox="0 0 4 7"><path d="M0.3 2.6L2 0.6L3.7 2.6ZM0.3 4.4L2 6.4L3.7 4.4Z" fill="#8c8c8c"/></svg>
<svg style="left:362.5px;top:240.4px" width="8" height="7.6" viewBox="0 0 8 7.6"><rect x="0" y="0" width="2.6" height="7.6" fill="#8d97a3"/><path d="M3.4 0.5H8M3.4 2.7H8M3.4 4.9H8M3.4 7.1H8M5.7 0V7.6" stroke="#a9b3bf" stroke-width="1" fill="none"/></svg>
<span class="t m" id="t73" style="left:375.9px;top:238.4px;line-height:14px;font-size:11.5px;color:#444;font-family:'Liberation Mono', monospace;transform:scaleX(0.8543);">C2</span>
<svg style="left:407.6px;top:241.4px" width="4" height="7" viewBox="0 0 4 7"><path d="M0.3 2.6L2 0.6L3.7 2.6ZM0.3 4.4L2 6.4L3.7 4.4Z" fill="#8c8c8c"/></svg>
<svg style="left:420.6px;top:240.4px" width="8" height="7.6" viewBox="0 0 8 7.6"><rect x="0" y="0" width="2.6" height="7.6" fill="#8d97a3"/><path d="M3.4 0.5H8M3.4 2.7H8M3.4 4.9H8M3.4 7.1H8M5.7 0V7.6" stroke="#a9b3bf" stroke-width="1" fill="none"/></svg>
<span class="t m" id="t74" style="left:433.4px;top:238.4px;line-height:14px;font-size:11.5px;color:#444;font-family:'Liberation Mono', monospace;transform:scaleX(0.8543);">C3</span>
<svg style="left:456.7px;top:241.4px" width="4" height="7" viewBox="0 0 4 7"><path d="M0.3 2.6L2 0.6L3.7 2.6ZM0.3 4.4L2 6.4L3.7 4.4Z" fill="#8c8c8c"/></svg>
<svg style="left:469.9px;top:240.4px" width="8" height="7.6" viewBox="0 0 8 7.6"><rect x="0" y="0" width="2.6" height="7.6" fill="#8d97a3"/><path d="M3.4 0.5H8M3.4 2.7H8M3.4 4.9H8M3.4 7.1H8M5.7 0V7.6" stroke="#a9b3bf" stroke-width="1" fill="none"/></svg>
<span class="t m" id="t75" style="left:482.6px;top:238.4px;line-height:14px;font-size:11.5px;color:#444;font-family:'Liberation Mono', monospace;transform:scaleX(0.8543);">C4</span>
<svg style="left:514.8px;top:241.4px" width="4" height="7" viewBox="0 0 4 7"><path d="M0.3 2.6L2 0.6L3.7 2.6ZM0.3 4.4L2 6.4L3.7 4.4Z" fill="#8c8c8c"/></svg>
<svg style="left:528.0px;top:240.4px" width="8" height="7.6" viewBox="0 0 8 7.6"><rect x="0" y="0" width="2.6" height="7.6" fill="#8d97a3"/><path d="M3.4 0.5H8M3.4 2.7H8M3.4 4.9H8M3.4 7.1H8M5.7 0V7.6" stroke="#a9b3bf" stroke-width="1" fill="none"/></svg>
<span class="t m" id="t76" style="left:541.0px;top:238.4px;line-height:14px;font-size:11.5px;color:#444;font-family:'Liberation Mono', monospace;transform:scaleX(0.8543);">C5</span>
<svg style="left:572.6px;top:241.4px" width="4" height="7" viewBox="0 0 4 7"><path d="M0.3 2.6L2 0.6L3.7 2.6ZM0.3 4.4L2 6.4L3.7 4.4Z" fill="#8c8c8c"/></svg>
<svg style="left:586.0px;top:240.4px" width="8" height="7.6" viewBox="0 0 8 7.6"><rect x="0" y="0" width="2.6" height="7.6" fill="#8d97a3"/><path d="M3.4 0.5H8M3.4 2.7H8M3.4 4.9H8M3.4 7.1H8M5.7 0V7.6" stroke="#a9b3bf" stroke-width="1" fill="none"/></svg>
<span class="t m" id="t77" style="left:598.9px;top:238.4px;line-height:14px;font-size:11.5px;color:#444;font-family:'Liberation Mono', monospace;transform:scaleX(0.8543);">C6</span>
<svg style="left:621.6px;top:241.4px" width="4" height="7" viewBox="0 0 4 7"><path d="M0.3 2.6L2 0.6L3.7 2.6ZM0.3 4.4L2 6.4L3.7 4.4Z" fill="#8c8c8c"/></svg>
<svg style="left:635.0px;top:240.4px" width="8" height="7.6" viewBox="0 0 8 7.6"><rect x="0" y="0" width="2.6" height="7.6" fill="#8d97a3"/><path d="M3.4 0.5H8M3.4 2.7H8M3.4 4.9H8M3.4 7.1H8M5.7 0V7.6" stroke="#a9b3bf" stroke-width="1" fill="none"/></svg>
<span class="t m" id="t78" style="left:648.0px;top:238.4px;line-height:14px;font-size:11.5px;color:#444;font-family:'Liberation Mono', monospace;transform:scaleX(0.8543);">C7</span>
<span class="t m" id="t79" style="left:243.3px;top:256.0px;line-height:14px;font-size:11.5px;color:#111;font-family:'Liberation Mono', monospace;transform:scaleX(0.8731);">id</span>
<span class="t m" id="t80" style="left:361.8px;top:256.0px;line-height:14px;font-size:11.5px;color:#111;font-family:'Liberation Mono', monospace;transform:scaleX(0.8736);">province</span>
<span class="t m" id="t81" style="left:420.0px;top:256.0px;line-height:14px;font-size:11.5px;color:#111;font-family:'Liberation Mono', monospace;transform:scaleX(0.8736);">city</span>
<span class="t m" id="t82" style="left:469.4px;top:256.0px;line-height:14px;font-size:11.5px;color:#111;font-family:'Liberation Mono', monospace;transform:scaleX(0.8736);">district</span>
<span class="t m" id="t83" style="left:527.3px;top:256.0px;line-height:14px;font-size:11.5px;color:#111;font-family:'Liberation Mono', monospace;transform:scaleX(0.8736);">platform</span>
<span class="t m" id="t84" style="left:585.6px;top:256.0px;line-height:14px;font-size:11.5px;color:#111;font-family:'Liberation Mono', monospace;transform:scaleX(0.8735);">brand</span>
<div class="a" style="left:631.5px;top:253.2px;width:74.70000000000005px;height:18.0px;overflow:hidden">
<span class="t m" id="t85" style="left:2.3px;top:2.8px;line-height:14px;font-size:11.5px;color:#111;font-family:'Liberation Mono', monospace;transform:scaleX(0.8736);">business_dis</span>
</div>
<span class="t m" id="t86" style="left:222.6px;top:273.6px;line-height:14px;font-size:11.5px;color:#444;font-family:'Liberation Mono', monospace;transform:scaleX(0.8833);">2</span>
<span class="t m" id="t87" style="left:243.3px;top:273.6px;line-height:14px;font-size:11.5px;color:#222;font-family:'Liberation Mono', monospace;transform:scaleX(0.8846);">705801349631553537</span>
<span class="t" id="t88" style="left:361.8px;top:273.6px;line-height:14px;font-size:11.5px;color:#a6a6a6;font-family:'Liberation Mono', monospace;font-style:italic;transform:scaleX(0.8643);">&lt;null&gt;</span>
<span class="t" id="t89" style="left:420.0px;top:273.6px;line-height:14px;font-size:11.5px;color:#a6a6a6;font-family:'Liberation Mono', monospace;font-style:italic;transform:scaleX(0.8643);">&lt;null&gt;</span>
<span class="t" id="t90" style="left:469.4px;top:273.6px;line-height:14px;font-size:11.5px;color:#a6a6a6;font-family:'Liberation Mono', monospace;font-style:italic;transform:scaleX(0.8643);">&lt;null&gt;</span>
<svg style="left:526.8px;top:275.09999999999997px" width="19.8" height="9.6" viewBox="0 0 20.625 10"><g style="transform-origin:0 10px"><g transform="translate(0.0,0)"><path d="M2.8 0.4L3.8 1.8M7.2 0.4L6.2 1.8M1.5 2.4H8.5M2.2 3.9H7.8M0.8 5.4H9.2M5 2.4V5.4M0.6 7.2H9.4M5 5.6C4.8 7.8 3 9.2 0.8 9.6M5.2 7.4C6 8.6 7.5 9.3 9.4 9.6" fill="none" stroke="#505050" stroke-width="0.6666666666666667" stroke-linecap="butt" stroke-linejoin="miter"/></g><g transform="translate(10.625,0)"><path d="M1.4 0.8H8.8V9.6H1.4ZM2.8 3.6H7.6M5.9 2.2V7.6L4.9 7.8M5.7 3.8L2.9 6.8" fill="none" stroke="#505050" stroke-width="0.6666666666666667" stroke-linecap="butt" stroke-linejoin="miter"/></g></g></svg>
<span class="t" id="t91" style="left:585.6px;top:273.6px;line-height:14px;font-size:11.5px;color:#a6a6a6;font-family:'Liberation Mono', monospace;font-style:italic;transform:scaleX(0.8643);">&lt;null&gt;</span>
<span class="t" id="t92" style="left:633.8px;top:273.6px;line-height:14px;font-size:11.5px;color:#a6a6a6;font-family:'Liberation Mono', monospace;font-style:italic;transform:scaleX(0.8643);">&lt;null&gt;</span>
<span class="t m" id="t93" style="left:222.6px;top:291.6px;line-height:14px;font-size:11.5px;color:#444;font-family:'Liberation Mono', monospace;transform:scaleX(0.8833);">3</span>
<span class="t m" id="t94" style="left:243.3px;top:291.6px;line-height:14px;font-size:11.5px;color:#222;font-family:'Liberation Mono', monospace;transform:scaleX(0.8846);">705801349656719360</span>
<span class="t" id="t95" style="left:361.8px;top:291.6px;line-height:14px;font-size:11.5px;color:#a6a6a6;font-family:'Liberation Mono', monospace;font-style:italic;transform:scaleX(0.8643);">&lt;null&gt;</span>
<span class="t" id="t96" style="left:420.0px;top:291.6px;line-height:14px;font-size:11.5px;color:#a6a6a6;font-family:'Liberation Mono', monospace;font-style:italic;transform:scaleX(0.8643);">&lt;null&gt;</span>
<span class="t" id="t97" style="left:469.4px;top:291.6px;line-height:14px;font-size:11.5px;color:#a6a6a6;font-family:'Liberation Mono', monospace;font-style:italic;transform:scaleX(0.8643);">&lt;null&gt;</span>
<svg style="left:526.8px;top:293.09999999999997px" width="19.8" height="9.6" viewBox="0 0 20.625 10"><g style="transform-origin:0 10px"><g transform="translate(0.0,0)"><path d="M2.8 0.4L3.8 1.8M7.2 0.4L6.2 1.8M1.5 2.4H8.5M2.2 3.9H7.8M0.8 5.4H9.2M5 2.4V5.4M0.6 7.2H9.4M5 5.6C4.8 7.8 3 9.2 0.8 9.6M5.2 7.4C6 8.6 7.5 9.3 9.4 9.6" fill="none" stroke="#505050" stroke-width="0.6666666666666667" stroke-linecap="butt" stroke-linejoin="miter"/></g><g transform="translate(10.625,0)"><path d="M1.4 0.8H8.8V9.6H1.4ZM2.8 3.6H7.6M5.9 2.2V7.6L4.9 7.8M5.7 3.8L2.9 6.8" fill="none" stroke="#505050" stroke-width="0.6666666666666667" stroke-linecap="butt" stroke-linejoin="miter"/></g></g></svg>
<span class="t" id="t98" style="left:585.6px;top:291.6px;line-height:14px;font-size:11.5px;color:#a6a6a6;font-family:'Liberation Mono', monospace;font-style:italic;transform:scaleX(0.8643);">&lt;null&gt;</span>
<span class="t" id="t99" style="left:633.8px;top:291.6px;line-height:14px;font-size:11.5px;color:#a6a6a6;font-family:'Liberation Mono', monospace;font-style:italic;transform:scaleX(0.8643);">&lt;null&gt;</span>
<span class="t m" id="t100" style="left:222.6px;top:309.6px;line-height:14px;font-size:11.5px;color:#444;font-family:'Liberation Mono', monospace;transform:scaleX(0.8833);">4</span>
<span class="t m" id="t101" style="left:243.3px;top:309.6px;line-height:14px;font-size:11.5px;color:#222;font-family:'Liberation Mono', monospace;transform:scaleX(0.8846);">705801349669302273</span>
<span class="t" id="t102" style="left:361.8px;top:309.6px;line-height:14px;font-size:11.5px;color:#a6a6a6;font-family:'Liberation Mono', monospace;font-style:italic;transform:scaleX(0.8643);">&lt;null&gt;</span>
<span class="t" id="t103" style="left:420.0px;top:309.6px;line-height:14px;font-size:11.5px;color:#a6a6a6;font-family:'Liberation Mono', monospace;font-style:italic;transform:scaleX(0.8643);">&lt;null&gt;</span>
<span class="t" id="t104" style="left:469.4px;top:309.6px;line-height:14px;font-size:11.5px;color:#a6a6a6;font-family:'Liberation Mono', monospace;font-style:italic;transform:scaleX(0.8643);">&lt;null&gt;</span>
<svg style="left:526.8px;top:311.09999999999997px" width="19.8" height="9.6" viewBox="0 0 20.625 10"><g style="transform-origin:0 10px"><g transform="translate(0.0,0)"><path d="M2.8 0.4L3.8 1.8M7.2 0.4L6.2 1.8M1.5 2.4H8.5M2.2 3.9H7.8M0.8 5.4H9.2M5 2.4V5.4M0.6 7.2H9.4M5 5.6C4.8 7.8 3 9.2 0.8 9.6M5.2 7.4C6 8.6 7.5 9.3 9.4 9.6" fill="none" stroke="#505050" stroke-width="0.6666666666666667" stroke-linecap="butt" stroke-linejoin="miter"/></g><g transform="translate(10.625,0)"><path d="M1.4 0.8H8.8V9.6H1.4ZM2.8 3.6H7.6M5.9 2.2V7.6L4.9 7.8M5.7 3.8L2.9 6.8" fill="none" stroke="#505050" stroke-width="0.6666666666666667" stroke-linecap="butt" stroke-linejoin="miter"/></g></g></svg>
<span class="t" id="t105" style="left:585.6px;top:309.6px;line-height:14px;font-size:11.5px;color:#a6a6a6;font-family:'Liberation Mono', monospace;font-style:italic;transform:scaleX(0.8643);">&lt;null&gt;</span>
<span class="t" id="t106" style="left:633.8px;top:309.6px;line-height:14px;font-size:11.5px;color:#a6a6a6;font-family:'Liberation Mono', monospace;font-style:italic;transform:scaleX(0.8643);">&lt;null&gt;</span>
<span class="t m" id="t107" style="left:222.6px;top:327.6px;line-height:14px;font-size:11.5px;color:#444;font-family:'Liberation Mono', monospace;transform:scaleX(0.8833);">5</span>
<span class="t m" id="t108" style="left:243.3px;top:327.6px;line-height:14px;font-size:11.5px;color:#222;font-family:'Liberation Mono', monospace;transform:scaleX(0.8846);">705801349677690880</span>
<span class="t" id="t109" style="left:361.8px;top:327.6px;line-height:14px;font-size:11.5px;color:#a6a6a6;font-family:'Liberation Mono', monospace;font-style:italic;transform:scaleX(0.8643);">&lt;null&gt;</span>
<span class="t" id="t110" style="left:420.0px;top:327.6px;line-height:14px;font-size:11.5px;color:#a6a6a6;font-family:'Liberation Mono', monospace;font-style:italic;transform:scaleX(0.8643);">&lt;null&gt;</span>
<span class="t" id="t111" style="left:469.4px;top:327.6px;line-height:14px;font-size:11.5px;color:#a6a6a6;font-family:'Liberation Mono', monospace;font-style:italic;transform:scaleX(0.8643);">&lt;null&gt;</span>
<svg style="left:526.8px;top:329.09999999999997px" width="19.8" height="9.6" viewBox="0 0 20.625 10"><g style="transform-origin:0 10px"><g transform="translate(0.0,0)"><path d="M2.8 0.4L3.8 1.8M7.2 0.4L6.2 1.8M1.5 2.4H8.5M2.2 3.9H7.8M0.8 5.4H9.2M5 2.4V5.4M0.6 7.2H9.4M5 5.6C4.8 7.8 3 9.2 0.8 9.6M5.2 7.4C6 8.6 7.5 9.3 9.4 9.6" fill="none" stroke="#505050" stroke-width="0.6666666666666667" stroke-linecap="butt" stroke-linejoin="miter"/></g><g transform="translate(10.625,0)"><path d="M1.4 0.8H8.8V9.6H1.4ZM2.8 3.6H7.6M5.9 2.2V7.6L4.9 7.8M5.7 3.8L2.9 6.8" fill="none" stroke="#505050" stroke-width="0.6666666666666667" stroke-linecap="butt" stroke-linejoin="miter"/></g></g></svg>
<span class="t" id="t112" style="left:585.6px;top:327.6px;line-height:14px;font-size:11.5px;color:#a6a6a6;font-family:'Liberation Mono', monospace;font-style:italic;transform:scaleX(0.8643);">&lt;null&gt;</span>
<span class="t" id="t113" style="left:633.8px;top:327.6px;line-height:14px;font-size:11.5px;color:#a6a6a6;font-family:'Liberation Mono', monospace;font-style:italic;transform:scaleX(0.8643);">&lt;null&gt;</span>
<span class="t m" id="t114" style="left:222.6px;top:345.6px;line-height:14px;font-size:11.5px;color:#444;font-family:'Liberation Mono', monospace;transform:scaleX(0.8833);">6</span>
<span class="t m" id="t115" style="left:243.3px;top:345.6px;line-height:14px;font-size:11.5px;color:#222;font-family:'Liberation Mono', monospace;transform:scaleX(0.8846);">705801349686079489</span>
<span class="t" id="t116" style="left:361.8px;top:345.6px;line-height:14px;font-size:11.5px;color:#a6a6a6;font-family:'Liberation Mono', monospace;font-style:italic;transform:scaleX(0.8643);">&lt;null&gt;</span>
<span class="t" id="t117" style="left:420.0px;top:345.6px;line-height:14px;font-size:11.5px;color:#a6a6a6;font-family:'Liberation Mono', monospace;font-style:italic;transform:scaleX(0.8643);">&lt;null&gt;</span>
<span class="t" id="t118" style="left:469.4px;top:345.6px;line-height:14px;font-size:11.5px;color:#a6a6a6;font-family:'Liberation Mono', monospace;font-style:italic;transform:scaleX(0.8643);">&lt;null&gt;</span>
<svg style="left:526.8px;top:347.09999999999997px" width="19.8" height="9.6" viewBox="0 0 20.625 10"><g style="transform-origin:0 10px"><g transform="translate(0.0,0)"><path d="M2.8 0.4L3.8 1.8M7.2 0.4L6.2 1.8M1.5 2.4H8.5M2.2 3.9H7.8M0.8 5.4H9.2M5 2.4V5.4M0.6 7.2H9.4M5 5.6C4.8 7.8 3 9.2 0.8 9.6M5.2 7.4C6 8.6 7.5 9.3 9.4 9.6" fill="none" stroke="#505050" stroke-width="0.6666666666666667" stroke-linecap="butt" stroke-linejoin="miter"/></g><g transform="translate(10.625,0)"><path d="M1.4 0.8H8.8V9.6H1.4ZM2.8 3.6H7.6M5.9 2.2V7.6L4.9 7.8M5.7 3.8L2.9 6.8" fill="none" stroke="#505050" stroke-width="0.6666666666666667" stroke-linecap="butt" stroke-linejoin="miter"/></g></g></svg>
<span class="t" id="t119" style="left:585.6px;top:345.6px;line-height:14px;font-size:11.5px;color:#a6a6a6;font-family:'Liberation Mono', monospace;font-style:italic;transform:scaleX(0.8643);">&lt;null&gt;</span>
<span class="t" id="t120" style="left:633.8px;top:345.6px;line-height:14px;font-size:11.5px;color:#a6a6a6;font-family:'Liberation Mono', monospace;font-style:italic;transform:scaleX(0.8643);">&lt;null&gt;</span>
<span class="t m" id="t121" style="left:222.6px;top:363.6px;line-height:14px;font-size:11.5px;color:#444;font-family:'Liberation Mono', monospace;transform:scaleX(0.8833);">7</span>
<span class="t m" id="t122" style="left:243.3px;top:363.6px;line-height:14px;font-size:11.5px;color:#222;font-family:'Liberation Mono', monospace;transform:scaleX(0.8846);">705801349694468096</span>
<span class="t" id="t123" style="left:361.8px;top:363.6px;line-height:14px;font-size:11.5px;color:#a6a6a6;font-family:'Liberation Mono', monospace;font-style:italic;transform:scaleX(0.8643);">&lt;null&gt;</span>
<span class="t" id="t124" style="left:420.0px;top:363.6px;line-height:14px;font-size:11.5px;color:#a6a6a6;font-family:'Liberation Mono', monospace;font-style:italic;transform:scaleX(0.8643);">&lt;null&gt;</span>
<span class="t" id="t125" style="left:469.4px;top:363.6px;line-height:14px;font-size:11.5px;color:#a6a6a6;font-family:'Liberation Mono', monospace;font-style:italic;transform:scaleX(0.8643);">&lt;null&gt;</span>
<svg style="left:526.8px;top:365.09999999999997px" width="19.8" height="9.6" viewBox="0 0 20.625 10"><g style="transform-origin:0 10px"><g transform="translate(0.0,0)"><path d="M2.8 0.4L3.8 1.8M7.2 0.4L6.2 1.8M1.5 2.4H8.5M2.2 3.9H7.8M0.8 5.4H9.2M5 2.4V5.4M0.6 7.2H9.4M5 5.6C4.8 7.8 3 9.2 0.8 9.6M5.2 7.4C6 8.6 7.5 9.3 9.4 9.6" fill="none" stroke="#505050" stroke-width="0.6666666666666667" stroke-linecap="butt" stroke-linejoin="miter"/></g><g transform="translate(10.625,0)"><path d="M1.4 0.8H8.8V9.6H1.4ZM2.8 3.6H7.6M5.9 2.2V7.6L4.9 7.8M5.7 3.8L2.9 6.8" fill="none" stroke="#505050" stroke-width="0.6666666666666667" stroke-linecap="butt" stroke-linejoin="miter"/></g></g></svg>
<span class="t" id="t126" style="left:585.6px;top:363.6px;line-height:14px;font-size:11.5px;color:#a6a6a6;font-family:'Liberation Mono', monospace;font-style:italic;transform:scaleX(0.8643);">&lt;null&gt;</span>
<span class="t" id="t127" style="left:633.8px;top:363.6px;line-height:14px;font-size:11.5px;color:#a6a6a6;font-family:'Liberation Mono', monospace;font-style:italic;transform:scaleX(0.8643);">&lt;null&gt;</span>
<span class="t m" id="t128" style="left:222.6px;top:381.6px;line-height:14px;font-size:11.5px;color:#444;font-family:'Liberation Mono', monospace;transform:scaleX(0.8833);">8</span>
<span class="t m" id="t129" style="left:243.3px;top:381.6px;line-height:14px;font-size:11.5px;color:#222;font-family:'Liberation Mono', monospace;transform:scaleX(0.8846);">705801349702856705</span>
<span class="t" id="t130" style="left:361.8px;top:381.6px;line-height:14px;font-size:11.5px;color:#a6a6a6;font-family:'Liberation Mono', monospace;font-style:italic;transform:scaleX(0.8643);">&lt;null&gt;</span>
<span class="t" id="t131" style="left:420.0px;top:381.6px;line-height:14px;font-size:11.5px;color:#a6a6a6;font-family:'Liberation Mono', monospace;font-style:italic;transform:scaleX(0.8643);">&lt;null&gt;</span>
<span class="t" id="t132" style="left:469.4px;top:381.6px;line-height:14px;font-size:11.5px;color:#a6a6a6;font-family:'Liberation Mono', monospace;font-style:italic;transform:scaleX(0.8643);">&lt;null&gt;</span>
<svg style="left:526.8px;top:383.09999999999997px" width="19.8" height="9.6" viewBox="0 0 20.625 10"><g style="transform-origin:0 10px"><g transform="translate(0.0,0)"><path d="M2.8 0.4L3.8 1.8M7.2 0.4L6.2 1.8M1.5 2.4H8.5M2.2 3.9H7.8M0.8 5.4H9.2M5 2.4V5.4M0.6 7.2H9.4M5 5.6C4.8 7.8 3 9.2 0.8 9.6M5.2 7.4C6 8.6 7.5 9.3 9.4 9.6" fill="none" stroke="#505050" stroke-width="0.6666666666666667" stroke-linecap="butt" stroke-linejoin="miter"/></g><g transform="translate(10.625,0)"><path d="M1.4 0.8H8.8V9.6H1.4ZM2.8 3.6H7.6M5.9 2.2V7.6L4.9 7.8M5.7 3.8L2.9 6.8" fill="none" stroke="#505050" stroke-width="0.6666666666666667" stroke-linecap="butt" stroke-linejoin="miter"/></g></g></svg>
<span class="t" id="t133" style="left:585.6px;top:381.6px;line-height:14px;font-size:11.5px;color:#a6a6a6;font-family:'Liberation Mono', monospace;font-style:italic;transform:scaleX(0.8643);">&lt;null&gt;</span>
<span class="t" id="t134" style="left:633.8px;top:381.6px;line-height:14px;font-size:11.5px;color:#a6a6a6;font-family:'Liberation Mono', monospace;font-style:italic;transform:scaleX(0.8643);">&lt;null&gt;</span>
<span class="t m" id="t135" style="left:222.6px;top:255.9px;line-height:14px;font-size:11.5px;color:#444;font-family:'Liberation Mono', monospace;transform:scaleX(0.8833);">1</span>
<div class="a" style="left:241px;top:397.4px;width:97px;height:5.4px;background:#cdcdcd;"></div>
<span class="t" id="t136" style="left:211.3px;top:410.8px;line-height:14px;font-size:9.6px;color:#1c1c1c;transform:scaleX(0.8975);">Encoding:</span>
<div class="a" style="left:254.5px;top:409.2px;width:120.5px;height:15px;background:#ffffff;border:1px solid #cbcbcb;box-sizing:border-box;border-radius:1.5px;"></div>
<span class="t" id="t137" style="left:258.2px;top:410.8px;line-height:14px;font-size:9.6px;color:#1c1c1c;transform:scaleX(0.8460);">UTF-8</span>
<svg style="left:362.5px;top:412.4px" width="10" height="10" viewBox="-5 -5 10 10"><path d="M-3.0 -1.65L0 1.65L3.0 -1.65Z" fill="#707070"/></svg>
</div></div></body></html>
